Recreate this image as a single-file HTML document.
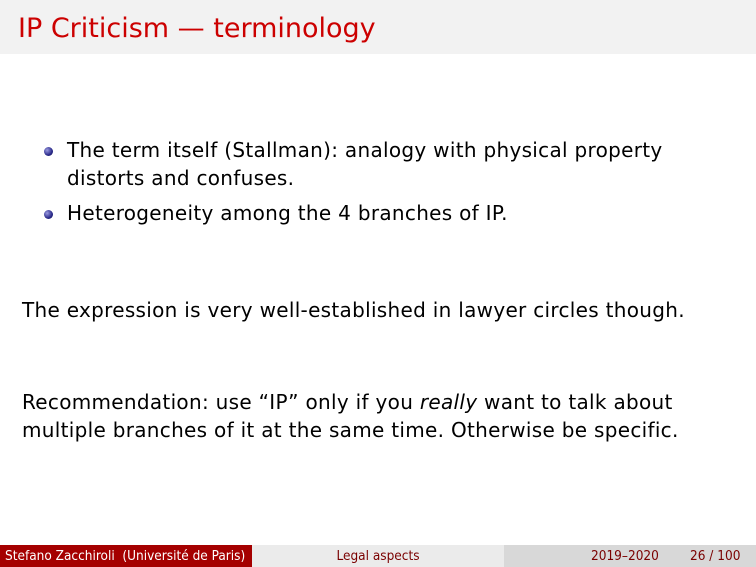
<!DOCTYPE html>
<html><head><meta charset="utf-8"><style>
body{margin:0;width:756px;height:567px;position:relative;overflow:hidden;background:#fff;font-family:"DejaVu Sans","Liberation Sans",sans-serif;color:#000}
.hd{position:absolute;left:0;top:0;width:756px;height:54px;background:#f2f2f2}
.hd span{position:absolute;left:18px;top:13px;font-size:27px;color:#cc0000}
.t{position:absolute;font-size:20px;white-space:nowrap;line-height:28px;letter-spacing:0.3px}
.b{position:absolute;width:9px;height:9px;border-radius:50%;background:radial-gradient(circle at 35% 35%,#9a9ae0,#2a2a8a 60%,#141450)}
.ft{position:absolute;top:545px;height:22px;font-size:13.5px;line-height:22px;font-family:"DejaVu Sans Condensed","DejaVu Sans",sans-serif}
</style></head><body>
<div class="hd"><span>IP Criticism — terminology</span></div>
<div class="b" style="left:44px;top:147px"></div>
<div class="t" style="left:67px;top:136px">The term itself (Stallman): analogy with physical property<br>distorts and confuses.</div>
<div class="b" style="left:44px;top:210px"></div>
<div class="t" style="left:67px;top:199px">Heterogeneity among the 4 branches of IP.</div>
<div class="t" style="left:22px;top:296px">The expression is very well-established in lawyer circles though.</div>
<div class="t" style="left:22px;top:388px">Recommendation: use “IP” only if you <i>really</i> want to talk about<br>multiple branches of it at the same time. Otherwise be specific.</div>
<div class="ft" style="left:0;width:252px;background:#a50000;color:#fff;padding-left:5px;box-sizing:border-box">Stefano Zacchiroli &nbsp;(Université de Paris)</div>
<div class="ft" style="left:252px;width:252px;background:#ebebeb;color:#7a0000;text-align:center">Legal aspects</div>
<div class="ft" style="left:504px;width:252px;background:#d8d8d8;color:#7a0000"><span style="position:absolute;left:87px">2019–2020</span><span style="position:absolute;left:186px">26 / 100</span></div>
</body></html>
